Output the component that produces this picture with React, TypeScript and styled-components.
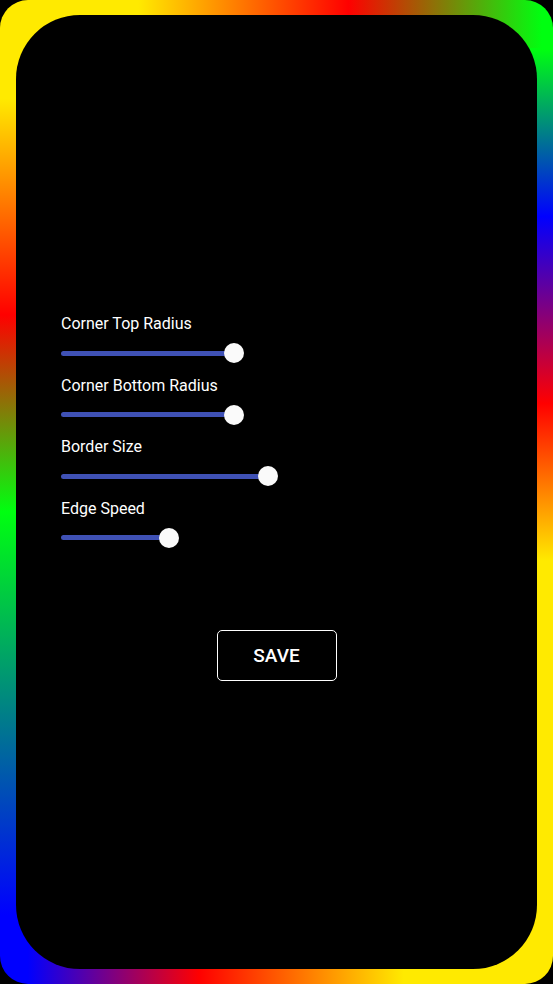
import React, { useState } from "react";
import styled, { createGlobalStyle } from "styled-components";

const GlobalStyle = createGlobalStyle`
  html, body {
    margin: 0;
    padding: 0;
    background: #000;
  }
  * {
    box-sizing: border-box;
  }
`;

type Setting = { label: string; value: number };

const settingsData: Setting[] = [
  { label: "Corner Top Radius", value: 57.7 },
  { label: "Corner Bottom Radius", value: 57.7 },
  { label: "Border Size", value: 69 },
  { label: "Edge Speed", value: 36 },
];

const SeekBar = ({ value }: { value: number }) => (
  <Track>
    <Fill style={{ width: `${value}%` }} />
    <Thumb style={{ left: `${value}%` }} />
  </Track>
);

const App = () => {
  const [settings] = useState<Setting[]>(settingsData);

  return (
    <>
      <GlobalStyle />
      <EdgeFrame>
        <Screen>
          <Settings>
            {settings.map((item, index) => (
              <SettingGroup key={index}>
                <Label>{item.label}</Label>
                <SeekBar value={item.value} />
              </SettingGroup>
            ))}
          </Settings>
          <ButtonRow>
            <SaveButton>SAVE</SaveButton>
          </ButtonRow>
        </Screen>
      </EdgeFrame>
    </>
  );
};

export default App;

// each side of the edge light has its own gradient; top/bottom strips sit over the sides
const EdgeFrame = styled.div`
  width: 553px;
  height: 984px;
  padding: 15px 16px;
  border-radius: 28px;
  background:
    linear-gradient(to right, #ffea00 0%, #ffea00 25%, #ff0000 63%, #00ff10 98%) top / 100% 48px no-repeat,
    linear-gradient(to right, #0000ff 5%, #ff0000 36%, #ffea00 73%, #ffea00 100%) bottom / 100% 48px no-repeat,
    linear-gradient(to bottom, #ffea00 10%, #ff0000 32%, #00ff10 52%, #0000ff 93%) left / 90px 100% no-repeat,
    linear-gradient(to bottom, #00ff10 5%, #0000ff 22%, #ff0000 41%, #ffea00 57%, #ffea00 100%) right / 90px 100% no-repeat;
`;

const Screen = styled.div`
  height: 100%;
  background: #000;
  border-radius: 64px;
  display: flex;
  flex-direction: column;
  padding-top: 300px;
  font-family: Roboto, "Liberation Sans", sans-serif;
`;

const Settings = styled.div`
  display: flex;
  flex-direction: column;
  gap: 13.5px;
  padding-left: 45px;
`;

const SettingGroup = styled.div`
  display: flex;
  flex-direction: column;
  gap: 10px;
`;

const Label = styled.div`
  color: #fff;
  font-size: 16px;
  line-height: 18px;
`;

const Track = styled.div`
  position: relative;
  width: 300px;
  height: 20px;
  display: flex;
  align-items: center;
`;

const Fill = styled.div`
  height: 5px;
  border-radius: 3px;
  background: #3f51b5;
`;

const Thumb = styled.div`
  position: absolute;
  top: 0;
  width: 20px;
  height: 20px;
  margin-left: -10px;
  border-radius: 50%;
  background: #fafafa;
`;

const ButtonRow = styled.div`
  display: flex;
  justify-content: center;
  margin-top: 82px;
`;

const SaveButton = styled.button`
  width: 120px;
  height: 51px;
  background: transparent;
  border: 1.5px solid #fff;
  border-radius: 5px;
  color: #fff;
  font-family: Roboto, "Liberation Sans", sans-serif;
  font-size: 19px;
  font-weight: 500;
  cursor: pointer;
`;
